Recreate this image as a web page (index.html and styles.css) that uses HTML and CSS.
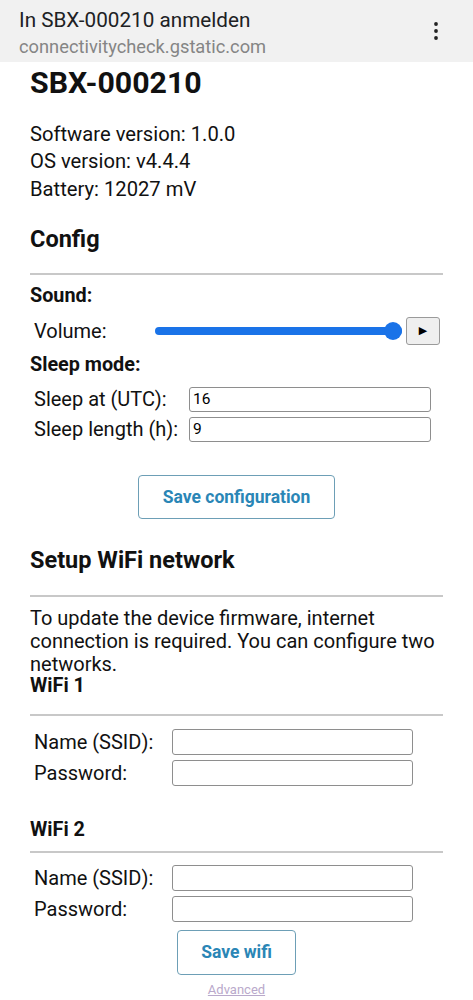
FILE: index.html
```html
<!DOCTYPE html>
<html lang="en">
<head>
<meta charset="utf-8">
<title>In SBX-000210 anmelden</title>
<link rel="stylesheet" href="styles.css">
</head>
<body>
<header class="bar">
  <div class="bar-text">
    <div class="bar-title">In SBX-000210 anmelden</div>
    <div class="bar-url">connectivitycheck.gstatic.com</div>
  </div>
  <svg class="bar-menu" width="6" height="20" viewBox="0 0 6 20" aria-hidden="true">
    <circle cx="3" cy="3" r="1.9" fill="#222"/>
    <circle cx="3" cy="10" r="1.9" fill="#222"/>
    <circle cx="3" cy="17" r="1.9" fill="#222"/>
  </svg>
</header>
<main class="page">
  <h1 class="device">SBX-000210</h1>
  <div class="info">
    <div>Software version: 1.0.0</div>
    <div>OS version: v4.4.4</div>
    <div>Battery: 12027 mV</div>
  </div>

  <h2 class="section section-config">Config</h2>
  <hr class="rule rule-config">

  <h3 class="group group-sound">Sound:</h3>
  <div class="volume-row">
    <label class="label" for="vol">Volume:</label>
    <input id="vol" class="slider" type="range" min="0" max="100" value="100">
    <button class="play" type="button">▶</button>
  </div>

  <h3 class="group group-sleep">Sleep mode:</h3>
  <div class="form-grid sleep-grid">
    <label class="label" for="sat">Sleep at (UTC):</label>
    <input id="sat" class="field" type="text" value="16">
    <label class="label" for="slen">Sleep length (h):</label>
    <input id="slen" class="field" type="text" value="9">
  </div>

  <div class="actions actions-config">
    <button class="action-btn btn-config" type="button">Save configuration</button>
  </div>

  <h2 class="section section-wifi">Setup WiFi network</h2>
  <hr class="rule rule-wifi">
  <p class="note">To update the device firmware, internet connection is required. You can configure two networks.</p>

  <h3 class="net net-1">WiFi 1</h3>
  <hr class="rule rule-net1">
  <div class="form-grid wifi-grid wifi-grid-1">
    <label class="label" for="ssid1">Name (SSID):</label>
    <input id="ssid1" class="field" type="text">
    <label class="label" for="pw1">Password:</label>
    <input id="pw1" class="field" type="password">
  </div>

  <h3 class="net net-2">WiFi 2</h3>
  <hr class="rule rule-net2">
  <div class="form-grid wifi-grid wifi-grid-2">
    <label class="label" for="ssid2">Name (SSID):</label>
    <input id="ssid2" class="field" type="text">
    <label class="label" for="pw2">Password:</label>
    <input id="pw2" class="field" type="password">
  </div>

  <div class="actions actions-wifi">
    <button class="action-btn btn-wifi" type="button">Save wifi</button>
  </div>
  <div class="advanced-wrap"><a class="advanced" href="#advanced">Advanced</a></div>
</main>
</body>
</html>
```

FILE: styles.css
```css
* { box-sizing: border-box; }

html, body {
  margin: 0;
  padding: 0;
  background: #ffffff;
}

body {
  font-family: Roboto, "Noto Sans", "Liberation Sans", sans-serif;
  color: #111;
  width: 473px;
  height: 1000px;
  overflow: hidden;
}

/* top bar */
.bar {
  height: 62px;
  background: #f1f1f1;
  display: flex;
  align-items: flex-start;
  justify-content: space-between;
  padding: 8px 0 0 19px;
}
.bar-title {
  font-size: 20.7px;
  line-height: 24px;
  color: #202124;
}
.bar-url {
  margin-top: 3.75px;
  font-size: 18.3px;
  line-height: 22px;
  color: #858585;
}
.bar-menu {
  margin: 13px 34px 0 0;
}

/* page */
.page {
  padding: 0 30px;
}

.device {
  margin: 3.6px 0 0;
  font-size: 30.3px;
  line-height: 34px;
  font-weight: 700;
}

.info {
  margin-top: 21.3px;
  font-size: 20.2px;
  line-height: 27.5px;
}

.section {
  margin: 0;
  font-size: 23.5px;
  line-height: 28px;
  font-weight: 700;
}
.section-config { margin-top: 21.5px; }
.section-wifi { margin-top: 27.3px; }

.rule {
  margin: 0;
  border: 0;
  border-top: 2px solid #c8c8c8;
  height: 0;
}
.rule-config { margin-top: 20px; }
.rule-wifi { margin-top: 20.7px; }
.rule-net1 { margin-top: 18.3px; }
.rule-net2 { margin-top: 10.8px; }

.group {
  margin: 0;
  font-size: 19.8px;
  line-height: 22px;
  font-weight: 700;
}
.group-sound { margin-top: 10.5px; }
.group-sleep { margin-top: 9.2px; }

.label {
  font-size: 20px;
  line-height: 24px;
  color: #111;
}

/* volume */
.volume-row {
  margin-top: 9.5px;
  height: 28px;
  display: grid;
  grid-template-columns: 121px 247px 38px;
  align-items: center;
  padding-left: 4px;
}

.slider {
  -webkit-appearance: none;
  appearance: none;
  margin: 0;
  width: 247px;
  height: 20px;
  background: transparent;
}
.slider::-webkit-slider-runnable-track {
  height: 8px;
  border-radius: 4px;
  background: #1a73e8;
}
.slider::-webkit-slider-thumb {
  -webkit-appearance: none;
  width: 18px;
  height: 18px;
  border-radius: 50%;
  background: #1a73e8;
  margin-top: -5px;
  border: 0;
}

.play {
  width: 34px;
  height: 28px;
  padding: 0;
  margin: 0 0 0 4px;
  background: #efefef;
  border: 1px solid #9a9a9a;
  border-radius: 3px;
  font-family: "DejaVu Sans", sans-serif;
  font-size: 11px;
  color: #000;
  line-height: 26px;
}

/* forms */
.form-grid {
  display: grid;
  row-gap: 5px;
  align-items: center;
  padding-left: 4px;
}
.sleep-grid {
  margin-top: 10.8px;
  grid-template-columns: 155px 242px;
  grid-auto-rows: 25px;
}
.wifi-grid {
  grid-template-columns: 138px 241px;
  grid-auto-rows: 26px;
}
.wifi-grid-1 { margin-top: 13px; }
.wifi-grid-2 { margin-top: 12px; }

.field {
  width: 100%;
  height: 100%;
  margin: 0;
  padding: 0 3px;
  border: 1px solid #8e8e8e;
  border-radius: 3px;
  background: #fff;
  font-family: Roboto, "Noto Sans", sans-serif;
  font-size: 15.5px;
  color: #000;
}

/* buttons */
.actions {
  display: flex;
  justify-content: center;
}
.actions-config { margin-top: 33px; }
.actions-wifi { margin-top: 8px; }

.action-btn {
  margin: 0;
  padding: 0;
  background: #fff;
  border: 1px solid #6d9fb6;
  border-radius: 4px;
  font-family: Roboto, "Noto Sans", sans-serif;
  font-weight: 700;
  font-size: 17.5px;
  color: #2a86b6;
}
.btn-config { width: 197px; height: 44px; }
.btn-wifi { width: 119px; height: 45px; }

/* wifi */
.note {
  margin: 9.7px 0 0;
  font-size: 20px;
  line-height: 23px;
}

.net {
  margin: 0;
  font-size: 19.8px;
  line-height: 20px;
  font-weight: 700;
}
.net-2 { margin-top: 34.2px; }

.advanced-wrap {
  margin-top: 7.5px;
  text-align: center;
  font-size: 13px;
  line-height: 16px;
}
.advanced {
  color: #b9a9cb;
  text-decoration: underline;
}
```
